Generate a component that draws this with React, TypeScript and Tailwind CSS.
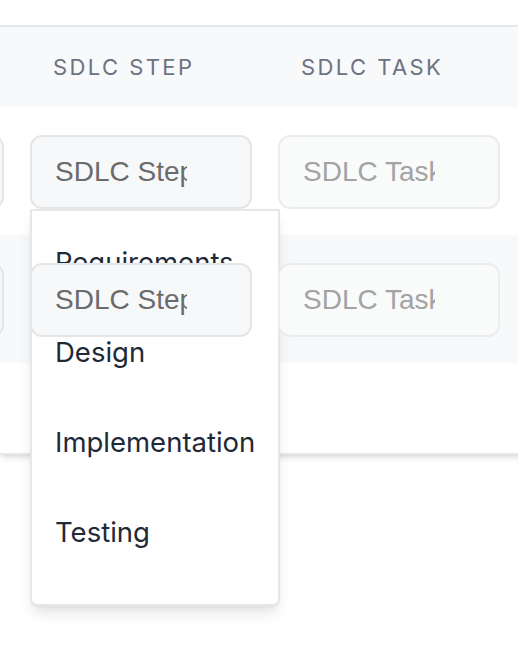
import { useState } from 'react'

const STEPS = ['Requirements', 'Design', 'Implementation', 'Testing']

interface Row {
  id: number
  step: string
  task: string
}

function StepInput({ value, raised }: { value: string; raised?: boolean }) {
  return (
    <input
      readOnly
      value={value}
      className={
        'w-[222px] h-[74px] shrink-0 rounded-[12px] border-2 border-[#e6e6e6] bg-[#f7f8f9] pl-[23px] pr-[63px] text-[28px] text-[#6b6b6b] outline-none font-["Liberation_Sans",Arial,sans-serif]' +
        (raised ? ' relative z-20' : '')
      }
    />
  )
}

function TaskInput({ raised }: { raised?: boolean }) {
  return (
    <input
      placeholder="SDLC Task"
      className={
        'w-[222px] h-[74px] shrink-0 rounded-[12px] border-2 border-[#ececec] bg-[#f9fafa] pl-[23px] pr-[63px] text-[28px] text-[#6b6b6b] placeholder:text-[#a3a3a3] outline-none font-["Liberation_Sans",Arial,sans-serif]' +
        (raised ? ' relative z-20' : '')
      }
    />
  )
}

export default function App() {
  const [rows] = useState<Row[]>([
    { id: 1, step: 'SDLC Step', task: '' },
    { id: 2, step: 'SDLC Step', task: '' },
  ])
  const [openRow] = useState(1)

  return (
    <div className="w-[518px] h-[658px] overflow-hidden bg-white pt-[25px] font-['Inter',sans-serif]">
      <div className="w-[600px] border-t-2 border-b-2 border-[#e5e7eb] shadow-md">
        {/* header */}
        <div className="h-[80px] bg-[#f8f9fb] flex items-center gap-[26px] ml-[-218px]">
          <div className="w-[222px] shrink-0" />
          <div className="w-[222px] shrink-0 pl-[23px] text-[22px] font-normal uppercase tracking-[0.11em] text-[#6b7280]">
            SDLC Step
          </div>
          <div className="w-[222px] shrink-0 pl-[23px] text-[22px] font-normal uppercase tracking-[0.11em] text-[#6b7280]">
            SDLC Task
          </div>
        </div>

        {rows.map((row, i) => (
          <div
            key={row.id}
            className={
              'h-[128px] pt-[28px] flex gap-[26px] ml-[-218px] ' + (i % 2 === 1 ? 'bg-[#f8f9fb]' : 'bg-white')
            }
          >
            <StepInput value={row.step} raised={i > 0} />
            <div className="relative shrink-0">
              <StepInput value={row.step} raised={i > 0} />
              {row.id === openRow && (
                <div className="absolute left-0 top-[74px] z-10 w-[250px] h-[397px] border-2 border-[#e5e7eb] bg-white rounded-b-[7px] shadow-lg pt-[7px] pb-[26px]">
                  {STEPS.map(s => (
                    <div key={s} className="h-[90px] flex items-center pl-[23px] text-[27.5px] text-[#1f2937] whitespace-nowrap">
                      {s}
                    </div>
                  ))}
                </div>
              )}
            </div>
            <TaskInput raised={i > 0} />
          </div>
        ))}

        <div className="h-[90px] bg-white" />
      </div>
    </div>
  )
}
